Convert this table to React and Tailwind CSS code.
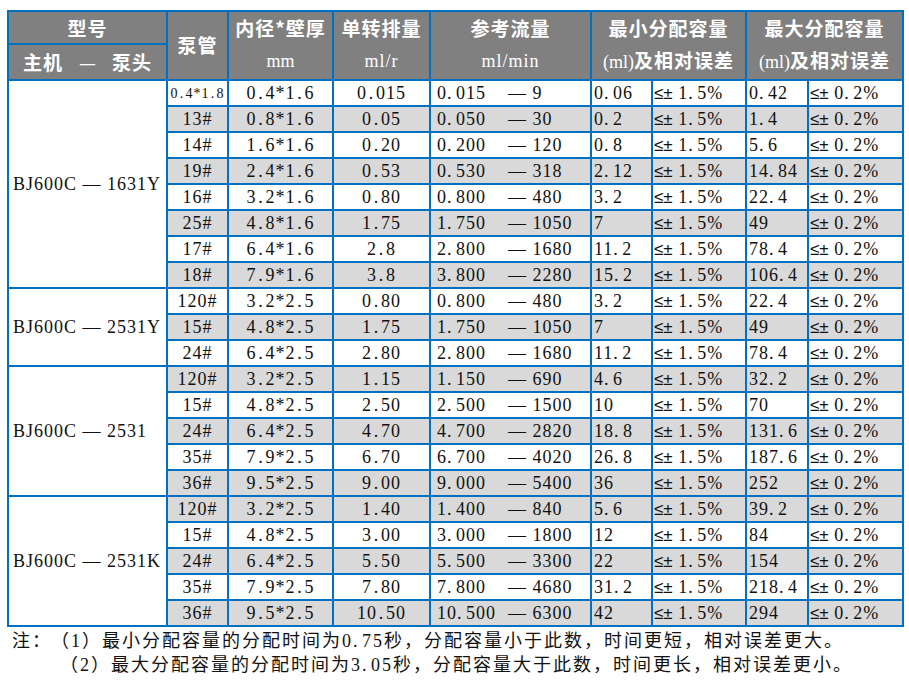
import React from "react";

const bd = "border-2 border-[#0070C0]";
const serif = "font-['Liberation_Serif','Noto_Sans_CJK_SC',serif]";
const hei = "font-['Noto_Sans_CJK_SC',sans-serif]";

// 模仿宋体的半角句点宽度
function num(s, small) {
  const parts = String(s).split(".");
  return parts.map((p, i) => (
    <React.Fragment key={i}>
      {i > 0 && (
        <span className={small ? "inline-block w-[7px]" : "inline-block w-[9px]"}>.</span>
      )}
      {p}
    </React.Fragment>
  ));
}

const groups = [
  {
    model: "BJ600C — 1631Y",
    rows: [
      ["0.4*1.8", "0.4*1.6", "0.015", "0.015", "9", "0.06", "0.42", false],
      ["13#", "0.8*1.6", "0.05", "0.050", "30", "0.2", "1.4", true],
      ["14#", "1.6*1.6", "0.20", "0.200", "120", "0.8", "5.6", false],
      ["19#", "2.4*1.6", "0.53", "0.530", "318", "2.12", "14.84", true],
      ["16#", "3.2*1.6", "0.80", "0.800", "480", "3.2", "22.4", false],
      ["25#", "4.8*1.6", "1.75", "1.750", "1050", "7", "49", true],
      ["17#", "6.4*1.6", "2.8", "2.800", "1680", "11.2", "78.4", false],
      ["18#", "7.9*1.6", "3.8", "3.800", "2280", "15.2", "106.4", true],
    ],
  },
  {
    model: "BJ600C — 2531Y",
    rows: [
      ["120#", "3.2*2.5", "0.80", "0.800", "480", "3.2", "22.4", false],
      ["15#", "4.8*2.5", "1.75", "1.750", "1050", "7", "49", true],
      ["24#", "6.4*2.5", "2.80", "2.800", "1680", "11.2", "78.4", false],
    ],
  },
  {
    model: "BJ600C — 2531",
    rows: [
      ["120#", "3.2*2.5", "1.15", "1.150", "690", "4.6", "32.2", true],
      ["15#", "4.8*2.5", "2.50", "2.500", "1500", "10", "70", false],
      ["24#", "6.4*2.5", "4.70", "4.700", "2820", "18.8", "131.6", true],
      ["35#", "7.9*2.5", "6.70", "6.700", "4020", "26.8", "187.6", false],
      ["36#", "9.5*2.5", "9.00", "9.000", "5400", "36", "252", true],
    ],
  },
  {
    model: "BJ600C — 2531K",
    rows: [
      ["120#", "3.2*2.5", "1.40", "1.400", "840", "5.6", "39.2", true],
      ["15#", "4.8*2.5", "3.00", "3.000", "1800", "12", "84", false],
      ["24#", "6.4*2.5", "5.50", "5.500", "3300", "22", "154", true],
      ["35#", "7.9*2.5", "7.80", "7.800", "4680", "31.2", "218.4", false],
      ["36#", "9.5*2.5", "10.50", "10.500", "6300", "42", "294", true],
    ],
  },
];

function HeadCell({ top, bottom, colSpan }) {
  return (
    <th rowSpan={2} colSpan={colSpan} className={`${bd} p-0 align-top font-normal`}>
      <div className="flex h-[31px] items-center justify-center pt-[2px] text-[19px] font-bold tracking-[1px]">
        {top}
      </div>
      <div className="flex h-[36px] items-center justify-center">{bottom}</div>
    </th>
  );
}

function Err({ v }) {
  return (
    <span>
      <span className="font-['Liberation_Sans',sans-serif] text-[17px] tracking-normal">≤±</span> {num(v)}%
    </span>
  );
}

export default function App() {
  return (
    <div className={`min-h-[684px] w-[909px] bg-white pl-[7px] pt-[10px] text-[#111] ${serif}`}>
      <table className="w-[895px] table-fixed border-collapse">
        <colgroup>
          <col className="w-[159px]" />
          <col className="w-[61px]" />
          <col className="w-[105px]" />
          <col className="w-[97px]" />
          <col className="w-[161px]" />
          <col className="w-[61px]" />
          <col className="w-[94px]" />
          <col className="w-[62px]" />
          <col className="w-[95px]" />
        </colgroup>
        <thead className="bg-[#808080] text-white">
          <tr className="h-[30px]">
            <th className={`${bd} p-0 pt-[2px] text-[19px] font-bold tracking-[1px] ${hei}`}>型号</th>
            <th rowSpan={2} className={`${bd} p-0 text-[19px] font-bold tracking-[1px] ${hei}`}>泵管</th>
            <HeadCell top={<span className={hei}>内径*壁厚</span>} bottom={<span className="text-[18px]">mm</span>} />
            <HeadCell top={<span className={hei}>单转排量</span>} bottom={<span className="text-[18px] tracking-[1px]">ml/r</span>} />
            <HeadCell top={<span className={hei}>参考流量</span>} bottom={<span className="text-[18px] tracking-[1px]">ml/min</span>} />
            <HeadCell
              colSpan={2}
              top={<span className={hei}>最小分配容量</span>}
              bottom={
                <span className="text-[18px]">
                  (ml)<span className={`${hei} text-[19px] font-bold tracking-[1px]`}>及相对误差</span>
                </span>
              }
            />
            <HeadCell
              colSpan={2}
              top={<span className={hei}>最大分配容量</span>}
              bottom={
                <span className="text-[18px]">
                  (ml)<span className={`${hei} text-[19px] font-bold tracking-[1px]`}>及相对误差</span>
                </span>
              }
            />
          </tr>
          <tr className="h-[35px]">
            <th className={`${bd} p-0 text-[19px] font-bold ${hei}`}>
              <div className="flex items-center justify-center gap-[16px]">
                <span className="tracking-[1px]">主机</span>
                <span className="font-normal">—</span>
                <span className="tracking-[1px]">泵头</span>
              </div>
            </th>
          </tr>
        </thead>
        <tbody className="text-[18px] leading-[22px] tracking-[1px]">
          {groups.map((g) =>
            g.rows.map((r, i) => {
              const bg = r[7] ? "bg-[#D9D9D9]" : "bg-white";
              return (
                <tr key={g.model + i} className="h-[26px]">
                  {i === 0 && (
                    <td rowSpan={g.rows.length} className={`${bd} bg-white p-0 pl-[4px] text-left`}>
                      {g.model}
                    </td>
                  )}
                  <td className={`${bd} ${bg} p-0 text-center`}>
                    {r[0] === "0.4*1.8" ? <span className="text-[14px]">{num(r[0], true)}</span> : r[0]}
                  </td>
                  <td className={`${bd} ${bg} p-0 text-center`}>{num(r[1])}</td>
                  <td className={`${bd} ${bg} p-0 text-center`}>{num(r[2])}</td>
                  <td className={`${bd} ${bg} whitespace-nowrap p-0 pl-[6px] text-left`}>
                    <span className="inline-block w-[71px]">{num(r[3])}</span>
                    <span>— {r[4]}</span>
                  </td>
                  <td className={`${bd} ${bg} p-0 pl-[2px] text-left`}>{num(r[5])}</td>
                  <td className={`${bd} ${bg} whitespace-nowrap p-0 pl-[1px] text-left`}>
                    <Err v="1.5" />
                  </td>
                  <td className={`${bd} ${bg} p-0 pl-[2px] text-left`}>{num(r[6])}</td>
                  <td className={`${bd} ${bg} whitespace-nowrap p-0 pl-[1px] text-left`}>
                    <Err v="0.2" />
                  </td>
                </tr>
              );
            })
          )}
        </tbody>
      </table>
      <div className="mt-[2px] pl-[5px] text-[18px] leading-[24px] tracking-[2px]">
        <div className="whitespace-nowrap">
          <span className="mr-[8px]">注：</span>（1）最小分配容量的分配时间为{num("0.75")}秒，分配容量小于此数，时间更短，相对误差更大。
        </div>
        <div className="whitespace-nowrap pl-[48px]">
          （2）最大分配容量的分配时间为{num("3.05")}秒，分配容量大于此数，时间更长，相对误差更小。
        </div>
      </div>
    </div>
  );
}
